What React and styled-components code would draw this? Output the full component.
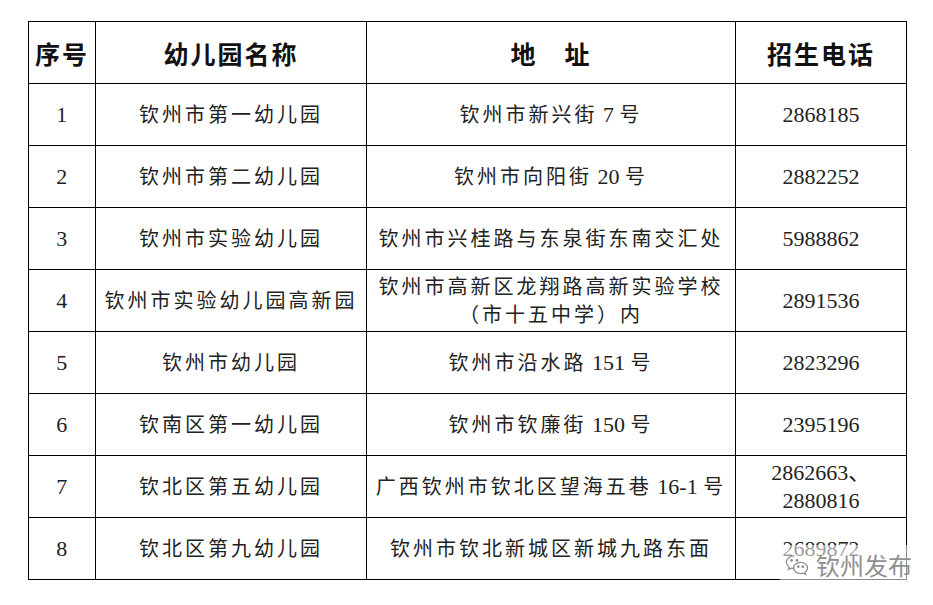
import React from "react";
import styled, { createGlobalStyle } from "styled-components";

const Global = createGlobalStyle`
  html, body { margin: 0; padding: 0; background: #fff; }
  body { width: 933px; height: 605px; overflow: hidden; }
`;

const Page = styled.div`
  padding: 21px 0 0 28px;
  position: relative;
  width: 933px;
  height: 605px;
  box-sizing: border-box;
`;

const Table = styled.table`
  border-collapse: collapse;
  table-layout: fixed;
  width: 878px;
  border: 1px solid #000;
`;

const Col = styled.col`
  width: ${(p) => p.$w}px;
`;

const HeadCell = styled.th`
  border: 1px solid #000;
  height: 61px;
  padding: 0;
  font-family: "Noto Sans CJK SC", sans-serif;
  font-weight: 700;
  font-size: 25px;
  color: #111;
  text-align: center;
  letter-spacing: 2px;
  white-space: pre;
`;

const Row = styled.tr`
  height: 62px;
`;

const Cell = styled.td`
  border: 1px solid #000;
  padding: 0;
  text-align: center;
  vertical-align: middle;
  font-family: "Liberation Serif", "Noto Sans CJK SC", serif;
  font-size: ${(p) => (p.$num ? 22 : 20)}px;
  font-weight: 400;
  color: #222;
  letter-spacing: ${(p) => (p.$num ? 0.5 : 3)}px;
  line-height: 28px;
`;

const Digits = styled.span`
  font-size: 22px;
  letter-spacing: 0;
`;

const Stack = styled.div`
  display: flex;
  flex-direction: column;
  align-items: center;
`;

const Watermark = styled.div`
  position: absolute;
  left: 780px;
  top: 545px;
  display: flex;
  align-items: center;
  gap: 6px;
  padding: 2px 4px;
  background: rgba(255, 255, 255, 0.55);
  color: #8f8f8f;
  font-family: "Noto Sans CJK SC", sans-serif;
  font-size: 24px;
  letter-spacing: 0;
`;

const rows = [
  ["1", "钦州市第一幼儿园", "钦州市新兴街 7 号", ["2868185"]],
  ["2", "钦州市第二幼儿园", "钦州市向阳街 20 号", ["2882252"]],
  ["3", "钦州市实验幼儿园", "钦州市兴桂路与东泉街东南交汇处", ["5988862"]],
  ["4", "钦州市实验幼儿园高新园", ["钦州市高新区龙翔路高新实验学校", "（市十五中学）内"], ["2891536"]],
  ["5", "钦州市幼儿园", "钦州市沿水路 151 号", ["2823296"]],
  ["6", "钦南区第一幼儿园", "钦州市钦廉街 150 号", ["2395196"]],
  ["7", "钦北区第五幼儿园", "广西钦州市钦北区望海五巷 16-1 号", ["2862663、", "2880816"]],
  ["8", "钦北区第九幼儿园", "钦州市钦北新城区新城九路东面", ["2689872"]],
];

function WeChatIcon() {
  return (
    <svg width="26" height="26" viewBox="0 0 24 24" fill="none" stroke="#8f8f8f" strokeWidth="1.2">
      <path d="M9.5 3.5C5.4 3.5 2.2 6.1 2.2 9.4c0 1.9 1 3.5 2.6 4.6l-.7 2.2 2.6-1.3c.9.3 1.8.4 2.8.4" />
      <path d="M15.3 9.6c3.5 0 6.4 2.3 6.4 5.2 0 1.6-.9 3-2.2 3.9l.5 1.9-2.2-1.1c-.8.2-1.6.4-2.5.4-3.5 0-6.4-2.3-6.4-5.1s2.9-5.2 6.4-5.2z" />
      <circle cx="7" cy="7.8" r="0.7" fill="#8f8f8f" />
      <circle cx="12" cy="7.8" r="0.7" fill="#8f8f8f" />
      <circle cx="13.2" cy="13.5" r="0.6" fill="#8f8f8f" />
      <circle cx="17.4" cy="13.5" r="0.6" fill="#8f8f8f" />
    </svg>
  );
}

function Text({ value }) {
  const parts = value.split(/( ?[0-9][0-9\-]* ?)/);
  return parts.map((p, i) =>
    /[0-9]/.test(p) ? <Digits key={i}>{p}</Digits> : <React.Fragment key={i}>{p}</React.Fragment>
  );
}

function Lines({ value }) {
  if (Array.isArray(value)) {
    return (
      <Stack>
        {value.map((v) => (
          <span key={v}>
            <Text value={v} />
          </span>
        ))}
      </Stack>
    );
  }
  return <Text value={value} />;
}

export default function App() {
  return (
    <>
      <Global />
      <Page>
        <Table>
          <colgroup>
            <Col $w={67} />
            <Col $w={271} />
            <Col $w={369} />
            <Col $w={171} />
          </colgroup>
          <thead>
            <tr>
              <HeadCell>序号</HeadCell>
              <HeadCell>幼儿园名称</HeadCell>
              <HeadCell>{"地　址"}</HeadCell>
              <HeadCell>招生电话</HeadCell>
            </tr>
          </thead>
          <tbody>
            {rows.map(([n, name, addr, tel]) => (
              <Row key={n}>
                <Cell $num>{n}</Cell>
                <Cell>{name}</Cell>
                <Cell>
                  <Lines value={addr} />
                </Cell>
                <Cell $num>
                  <Lines value={tel} />
                </Cell>
              </Row>
            ))}
          </tbody>
        </Table>
        <Watermark>
          <WeChatIcon />
          <span>钦州发布</span>
        </Watermark>
      </Page>
    </>
  );
}
